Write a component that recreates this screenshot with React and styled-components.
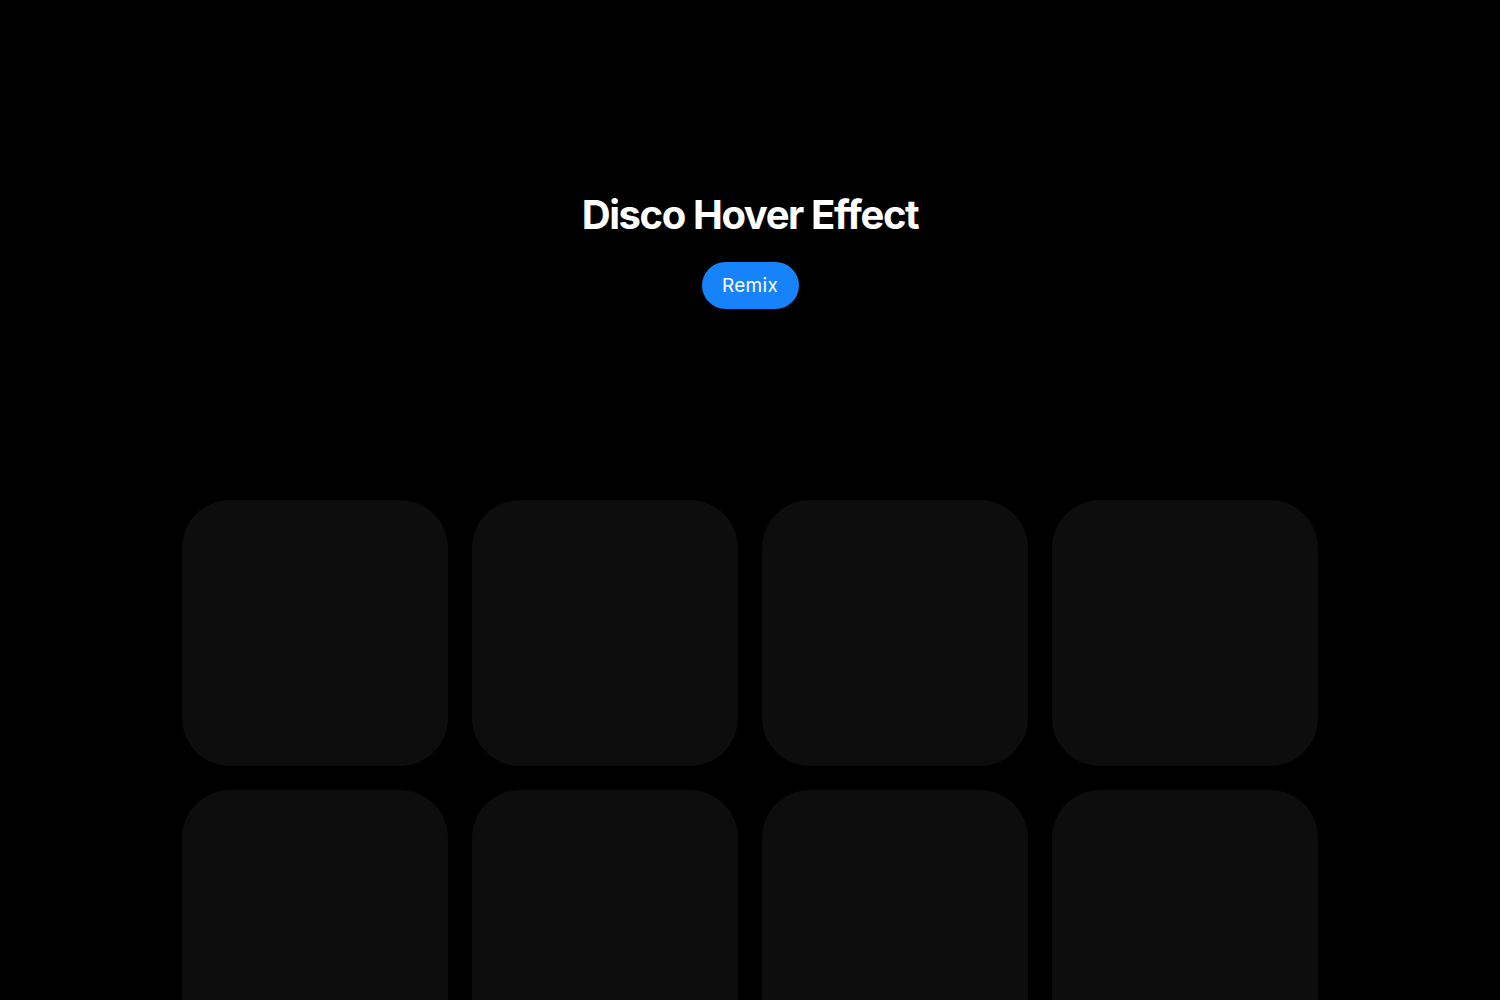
import React from 'react';
import styled, { createGlobalStyle } from 'styled-components';

const GlobalStyle = createGlobalStyle`
  html, body {
    margin: 0;
    padding: 0;
    background: #000;
  }
  body {
    font-family: Inter, "Noto Sans", sans-serif;
    overflow: hidden;
  }
`;

const Page = styled.main`
  min-height: 100vh;
  display: flex;
  flex-direction: column;
  align-items: center;
  padding-top: 191px;
  box-sizing: border-box;
`;

const Title = styled.h1`
  margin: 0;
  color: #fff;
  font-size: 40px;
  line-height: 48px;
  font-weight: 700;
  letter-spacing: -1.4px;
`;

const RemixButton = styled.button`
  margin-top: 23px;
  height: 47px;
  width: 97px;
  padding: 0;
  border: none;
  border-radius: 999px;
  background: #1683fb;
  color: #fff;
  font-family: Inter, "Noto Sans", sans-serif;
  font-size: 19px;
  font-weight: 400;
  letter-spacing: 0.3px;
  cursor: pointer;
`;

const Grid = styled.section`
  margin-top: 191px;
  display: grid;
  grid-template-columns: repeat(4, 266px);
  gap: 24px;
`;

const Tile = styled.div`
  width: 266px;
  height: 266px;
  border-radius: 48px;
  background: #0d0d0d;
`;

const App = () => {
  const tiles = Array.from({ length: 8 });

  return (
    <>
      <GlobalStyle />
      <Page>
        <Title>Disco Hover Effect</Title>
        <RemixButton>Remix</RemixButton>
        <Grid>
          {tiles.map((_, i) => (
            <Tile key={i} />
          ))}
        </Grid>
      </Page>
    </>
  );
};

export default App;
